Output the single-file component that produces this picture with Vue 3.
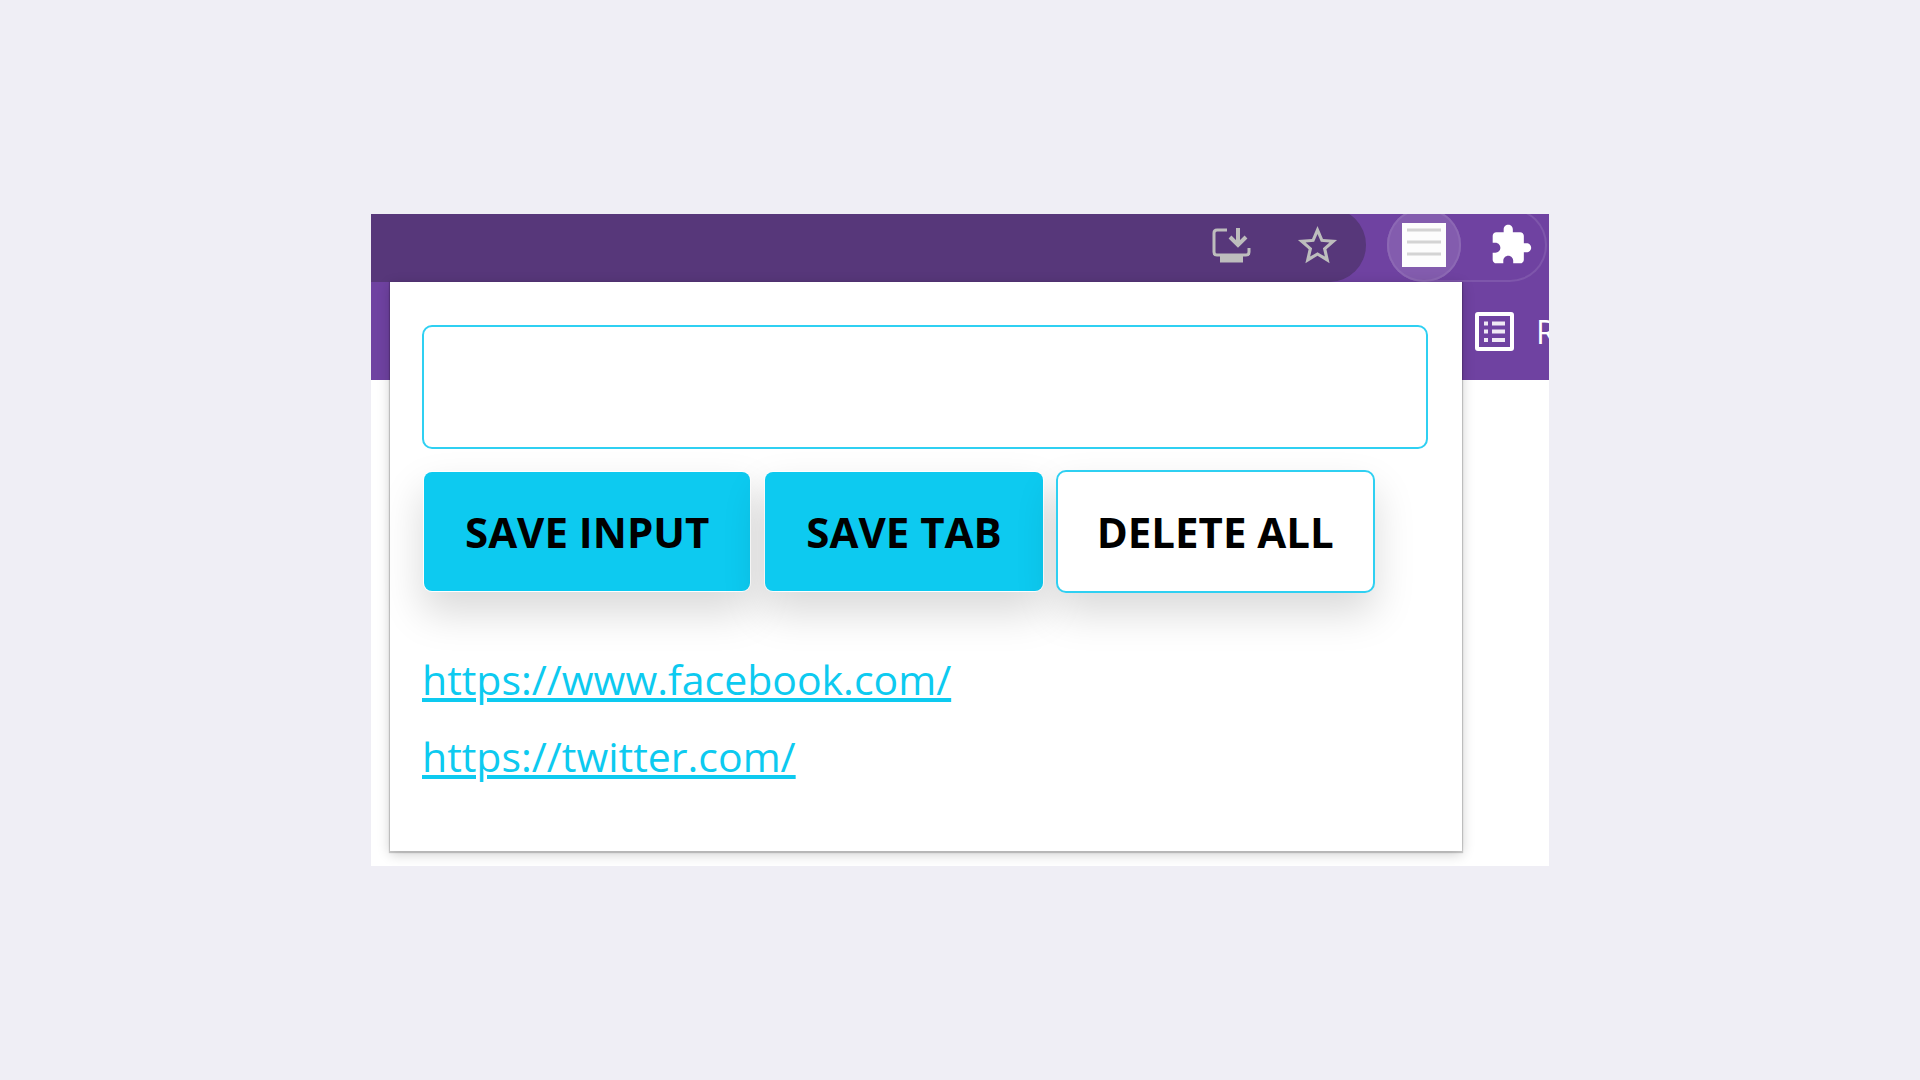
<script setup>
import { ref } from 'vue'

const draft = ref('')
const saved = ref(['https://www.facebook.com/', 'https://twitter.com/'])

function saveInput() {
  if (draft.value) saved.value.push(draft.value)
  draft.value = ''
}
function saveTab() {
  saved.value.push(window.location.href)
}
function deleteAll() {
  saved.value = []
}
</script>

<template>
  <main class="page">
    <div class="browser">
      <header class="toolbar">
        <div class="omnibox">
          <button class="icon-btn" aria-label="Install app">
            <svg width="40" height="40" viewBox="0 0 40 40" fill="none" stroke="#bdbdbd">
              <path d="M16 5H6Q3 5 3 8v19q0 3 3 3h29q3 0 3-3v-4" stroke-width="3" />
              <path d="M27 3v18" stroke-width="4" />
              <path d="M19 12l8 8 8-8" stroke-width="4" />
              <path d="M9 34h23" stroke-width="7" />
            </svg>
          </button>
          <button class="icon-btn" aria-label="Bookmark this tab">
            <svg width="47" height="47" viewBox="0 0 24 24" fill="#bdbdbd">
              <path d="M22 9.24l-7.19-.62L12 2 9.19 8.63 2 9.24l5.46 4.73L5.82 21 12 17.27 18.18 21l-1.63-7.03L22 9.24zM12 15.4l-3.76 2.27 1-4.28-3.32-2.88 4.38-.38L12 6.1l1.71 4.04 4.38.38-3.32 2.88 1 4.28L12 15.4z" />
            </svg>
          </button>
        </div>
        <div class="extensions">
          <button class="icon-btn active" aria-label="Link saver">
            <svg width="44" height="44" viewBox="0 0 44 44">
              <rect width="44" height="44" fill="#fdfdfd" />
              <path d="M5 7h34M5 19h34M5 31h34" stroke="#d4d4d4" stroke-width="3" />
            </svg>
          </button>
          <button class="icon-btn puzzle" aria-label="Extensions">
            <svg width="44" height="44" viewBox="0 0 24 24" fill="#fff">
              <path d="M20.5 11H19V7c0-1.1-.9-2-2-2h-4V3.5C13 2.12 11.88 1 10.5 1S8 2.12 8 3.5V5H4c-1.1 0-1.99.9-1.99 2v3.8H3.5c1.49 0 2.7 1.21 2.7 2.7s-1.21 2.7-2.7 2.7H2V20c0 1.1.9 2 2 2h3.8v-1.5c0-1.49 1.21-2.7 2.7-2.7 1.49 0 2.7 1.21 2.7 2.7V22H17c1.1 0 2-.9 2-2v-4h1.5c1.38 0 2.5-1.12 2.5-2.5S21.88 11 20.5 11z" />
            </svg>
          </button>
        </div>
      </header>

      <div class="content">
        <nav class="bookmarks">
          <svg width="39" height="39" viewBox="0 0 39 39" fill="none" stroke="#fff">
            <rect x="2" y="2" width="35" height="35" rx="1" stroke-width="4" />
            <path d="M9 11.5h4M9 19.5h4M9 28h4M17 11.5h13M17 19.5h13M17 28h13" stroke-width="4" stroke="#efe9f5" />
          </svg>
          <span>R</span>
        </nav>

        <section class="popup">
          <input v-model="draft" class="field" type="text" aria-label="Link to save" />
          <div class="actions">
            <button class="action filled" @click="saveInput">SAVE INPUT</button>
            <button class="action filled" @click="saveTab">SAVE TAB</button>
            <button class="action" @click="deleteAll">DELETE ALL</button>
          </div>
          <ul class="links">
            <li v-for="link in saved" :key="link">
              <a :href="link" target="_blank">{{ link }}</a>
            </li>
          </ul>
        </section>
      </div>
    </div>
  </main>
</template>

<style>
body {
  background: #efeef5;
}
</style>

<style scoped>
.page {
  min-height: 100vh;
  display: flex;
  align-items: center;
  justify-content: center;
  font-family: "Open Sans", "Noto Sans", sans-serif;
}
.page * {
  box-sizing: border-box;
}
.browser {
  width: 100%;
  max-width: 1178px;
  overflow: hidden;
  background: #fff;
}
.toolbar {
  display: flex;
  align-items: flex-end;
  gap: 21px;
  height: 68px;
  padding-right: 2px;
  background: #6f42a1;
}
.omnibox {
  flex: 1;
  height: 74px;
  display: flex;
  align-items: center;
  justify-content: flex-end;
  gap: 43px;
  padding-right: 25px;
  border-radius: 0 37px 37px 0;
  background: #57377a;
}
.icon-btn {
  display: flex;
  align-items: center;
  justify-content: center;
  padding: 0;
  border: 0;
  background: none;
}
.extensions {
  width: 160px;
  height: 74px;
  display: flex;
  align-items: center;
  border-radius: 37px;
  box-shadow: inset 0 0 0 2px #7e56ab;
}
.active {
  width: 74px;
  height: 74px;
  border-radius: 50%;
  background: #835cae;
  box-shadow: inset 0 0 0 2px #8c68b4;
}
.puzzle {
  margin-left: 28px;
}
.content {
  display: grid;
  grid-template-columns: 100%;
  align-items: start;
}
.bookmarks,
.popup {
  grid-area: 1 / 1;
}
.bookmarks {
  height: 98px;
  display: flex;
  align-items: center;
  justify-content: flex-end;
  gap: 22px;
  background: #6f42a1;
  color: #fff;
  font-size: 32px;
}
.bookmarks span {
  width: 13px;
}
.popup {
  min-width: 0;
  margin: 0 87px 15px 19px;
  padding: 43px 34px 56px 32px;
  background: #fff;
  box-shadow: 0 1px 1px 1px rgba(0, 0, 0, 0.18), 0 3px 12px rgba(0, 0, 0, 0.2);
}
.field {
  display: block;
  width: 100%;
  height: 124px;
  padding: 0 24px;
  border: 2px solid #2fd0f2;
  border-radius: 10px;
  font: inherit;
  font-size: 41px;
}
.actions {
  display: flex;
  gap: 11px;
  margin-top: 21px;
}
.action {
  height: 123px;
  padding: 0 39px;
  border: 2px solid #2fd0f2;
  border-radius: 10px;
  background: #fff;
  color: #000;
  font: inherit;
  font-size: 42px;
  font-weight: 700;
  white-space: nowrap;
  box-shadow: 0 20px 40px rgba(0, 0, 0, 0.15);
}
.filled {
  padding: 0 41px;
  border-color: transparent;
  background: #0dcaf0;
  background-clip: padding-box;
}
.links {
  margin: 0;
  padding: 48px 0 0;
  list-style: none;
  font-size: 41px;
  line-height: 77px;
}
.links a {
  color: #0dcaf0;
  text-decoration-thickness: 4px;
  text-underline-offset: 3px;
}
</style>
